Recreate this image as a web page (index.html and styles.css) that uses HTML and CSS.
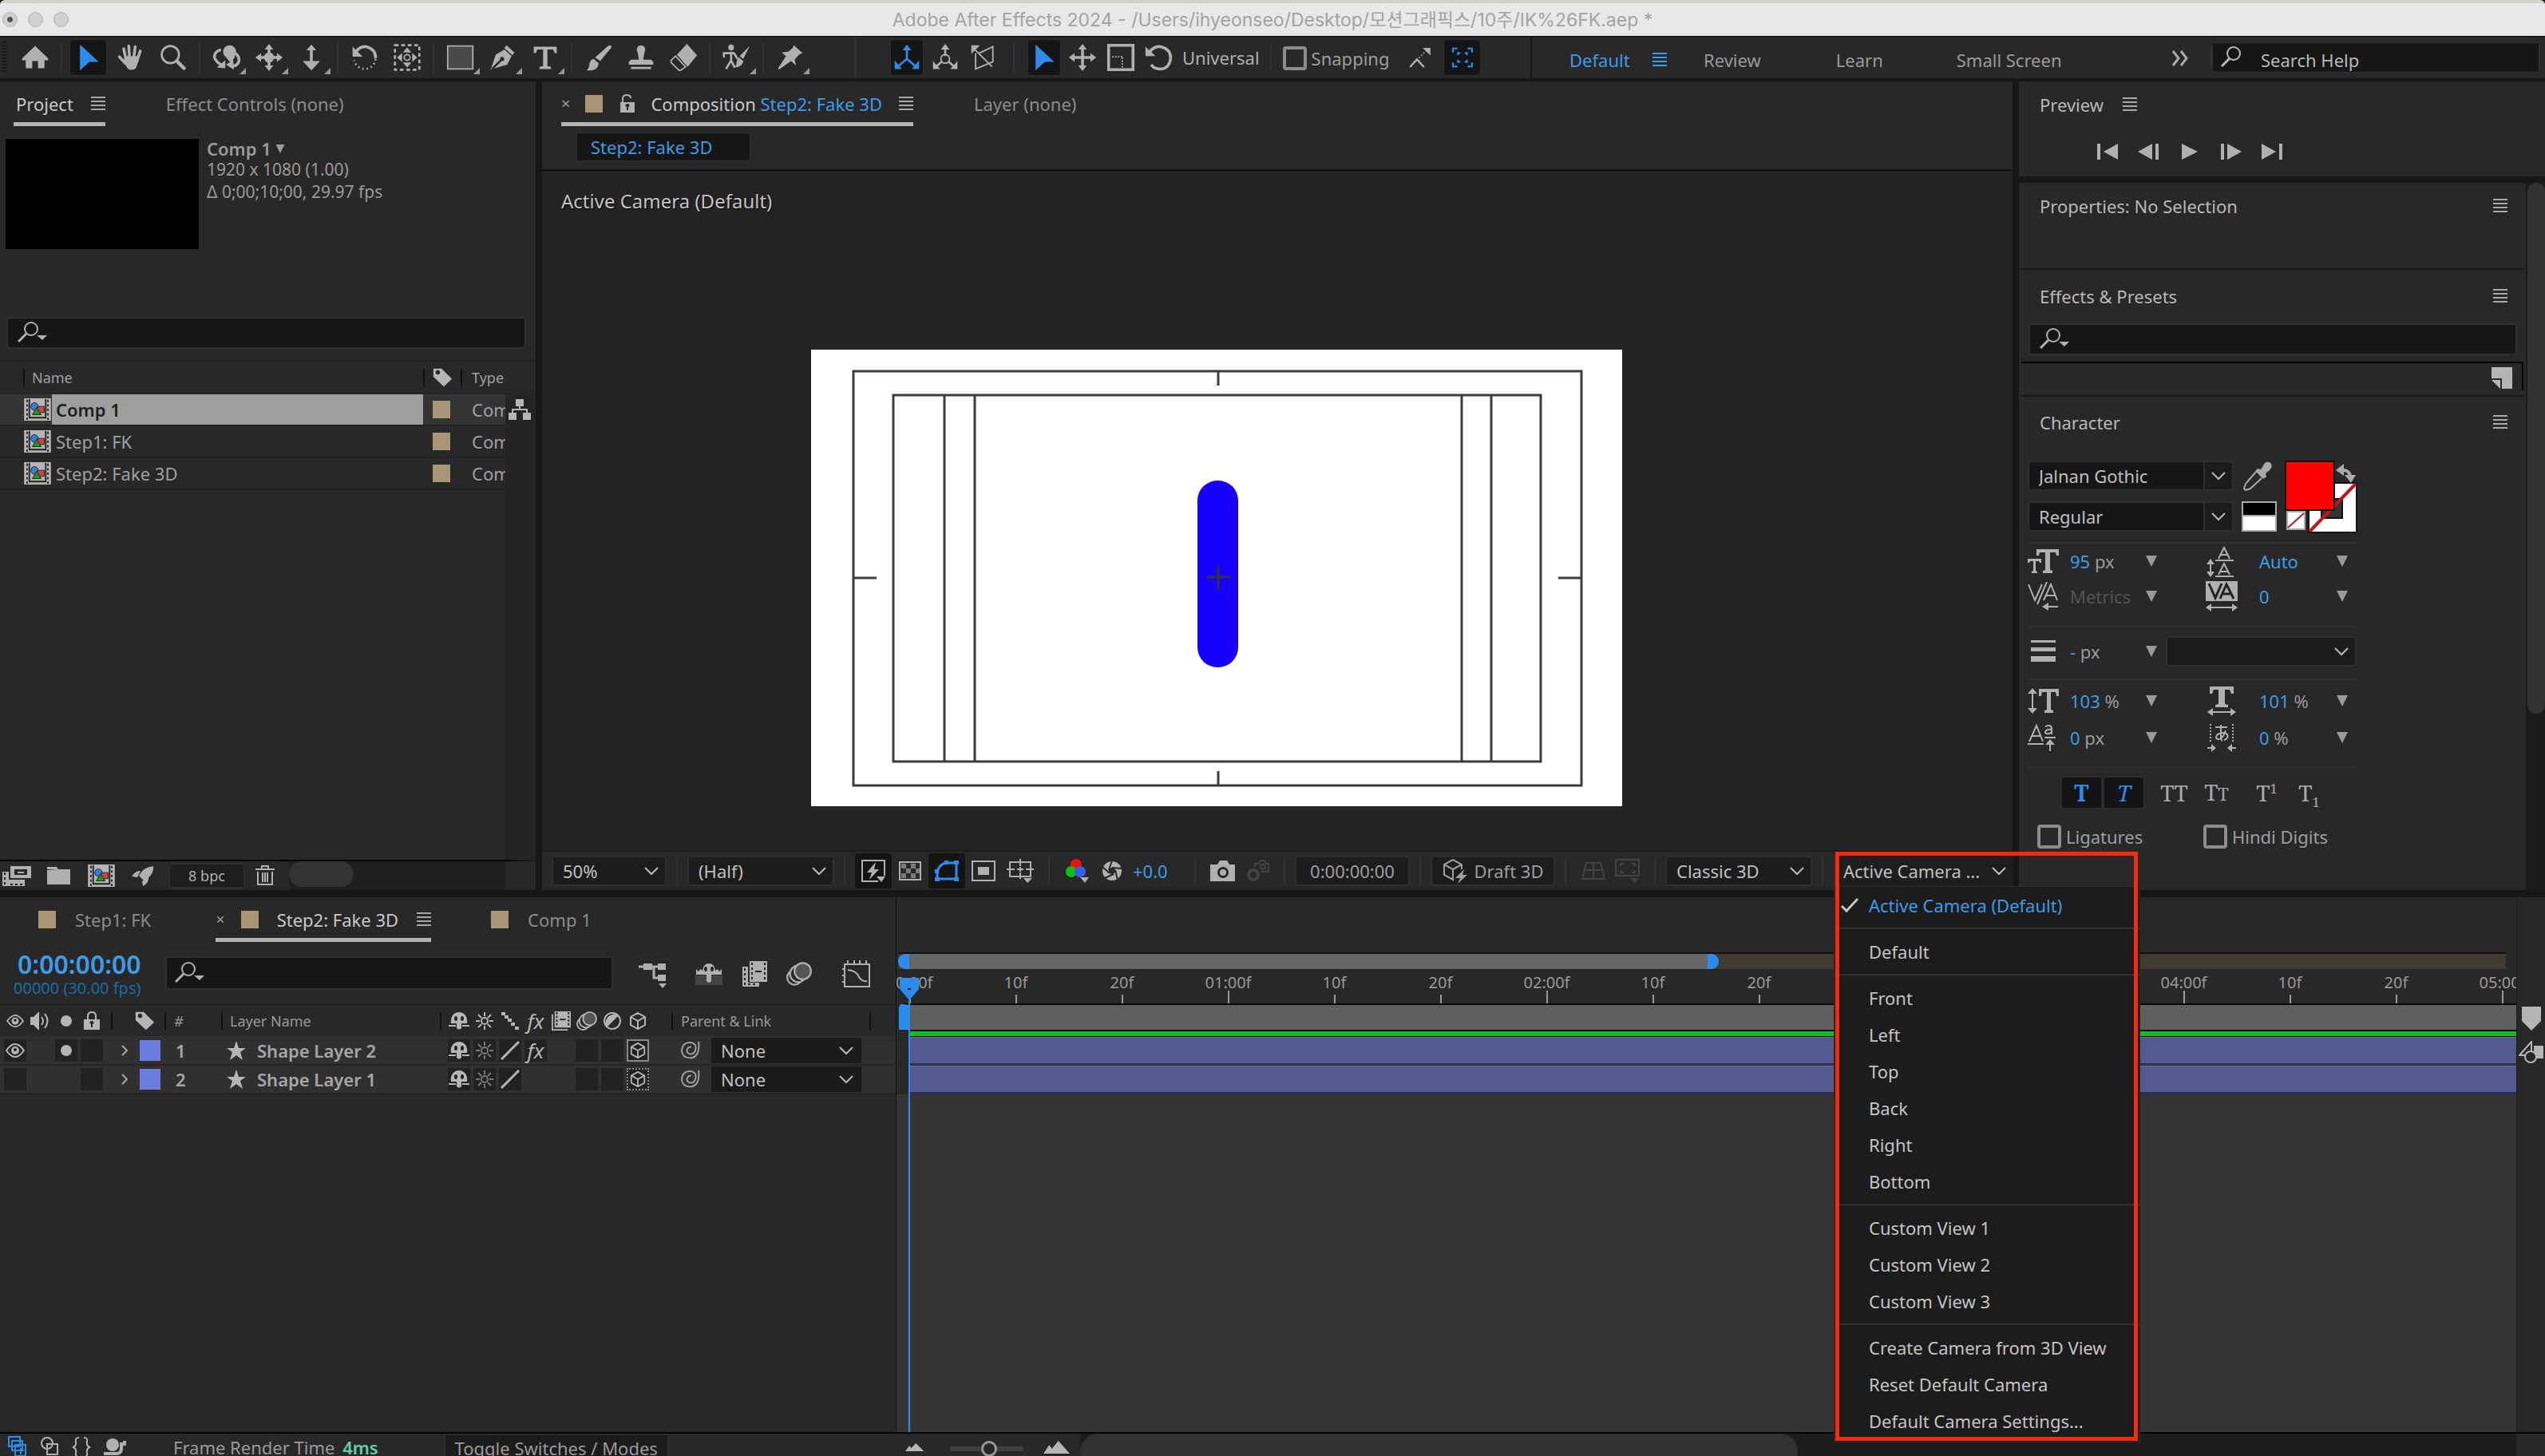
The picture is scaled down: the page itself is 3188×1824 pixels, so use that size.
FILE: index.html
```html
<!DOCTYPE html>
<html lang="en">
<head>
<meta charset="utf-8">
<title>Adobe After Effects 2024</title>
<link rel="stylesheet" href="styles.css">
</head>
<body>
<svg class="sprite" aria-hidden="true">
  <symbol id="home" viewBox="0 0 40 40"><path fill="currentColor" d="M20 4 38 21v3h-5v11h-9V25h-8v10H7V24H2v-3z"/></symbol>
  <symbol id="arrow" viewBox="0 0 40 40"><path fill="currentColor" d="M8 2 34 26H21L8 38z"/></symbol>
  <symbol id="hand" viewBox="0 0 40 40"><g fill="none" stroke="currentColor" stroke-linecap="round" stroke-width="4"><path d="m13 22-3-14M18 20 17 4M24 20l2-15M29 23l4-12M12 28l-8-9"/></g><path fill="currentColor" d="M11 18h19l1 6-4 11q-5 4-11 1l-6-9z"/></symbol>
  <symbol id="lens" viewBox="0 0 40 40"><circle cx="16" cy="16" r="12" fill="none" stroke="currentColor" stroke-width="3"/><path stroke="currentColor" stroke-linecap="round" stroke-width="5" d="m26 26 9 9"/></symbol>
  <symbol id="orbit" viewBox="0 0 40 40"><circle cx="24" cy="12" r="9" fill="currentColor"/><path fill="currentColor" d="m16 16 10 12 6-10z"/><path fill="none" stroke="currentColor" stroke-width="4" d="M12 9Q2 12 3 20q2 6 9 10M32 14q6 5 5 11-2 8-12 7"/><path fill="currentColor" d="m6 34 12-10v11zM30 37l-11-7 10-6z"/></symbol>
  <symbol id="move" viewBox="0 0 40 40"><path stroke="currentColor" stroke-width="4" d="M20 6v28M6 20h28"/><path fill="currentColor" d="m20 1 6 8H14zm0 38-6-8h12zM1 20l8-6v12zm38 0-8 6V14z"/></symbol>
  <symbol id="pan" viewBox="0 0 40 40"><circle cx="20" cy="20" r="7" fill="currentColor"/><path stroke="currentColor" stroke-width="4" d="M20 6v28M6 20h28"/><path fill="currentColor" d="m20 1 6 8H14zm0 38-6-8h12zM1 20l8-6v12zm38 0-8 6V14z"/></symbol>
  <symbol id="dolly" viewBox="0 0 40 40"><path stroke="currentColor" stroke-width="4" d="M20 6v24"/><path fill="currentColor" d="m20 2 7 8H13zm0 36L8 25h24z"/></symbol>
  <symbol id="rotate" viewBox="0 0 40 40"><path fill="none" stroke="currentColor" stroke-width="4" d="M7 13Q13 4 22 5q13 3 13 16"/><path fill="none" stroke="currentColor" stroke-dasharray="2 4" stroke-width="3" d="M35 22q-2 13-15 14Q8 35 5 24"/><path fill="currentColor" d="M3 5v14h14z"/></symbol>
  <symbol id="anchor" viewBox="0 0 40 40"><path fill="none" stroke="currentColor" stroke-width="3" stroke-dasharray="5 4" d="M3 3h34v34H3z"/><path fill="currentColor" d="m20 6 6 7H14zm0 28-6-7h12zM6 20l7-6v12zm28 0-7 6V14z"/><circle cx="20" cy="20" r="4" fill="none" stroke="currentColor" stroke-width="2"/></symbol>
  <symbol id="rect" viewBox="0 0 40 40"><path fill="#4a4a4a" stroke="currentColor" stroke-width="2" d="M2 4h35v32H2z"/></symbol>
  <symbol id="pen" viewBox="0 0 40 40"><path fill="currentColor" fill-rule="evenodd" d="m22 9 10 9-6 12L5 36l-1-1 12-12a3 3 0 1 1 2 2L8 35l-5 2L10 16zM25 3l11 10-3 4L22 7z"/></symbol>
  <symbol id="type" viewBox="0 0 40 40"><path fill="currentColor" d="M4 5h32v9h-3l-2-5h-8v23l5 1v3H12v-3l5-1V9H9l-2 5H4z"/></symbol>
  <symbol id="brush" viewBox="0 0 40 40"><path fill="currentColor" d="M36 3q3 1 1 4L22 25l-7-5L33 4zM13 22l7 6q-1 9-10 10H3q4-3 4-9 1-6 6-7z"/></symbol>
  <symbol id="stamp" viewBox="0 0 40 40"><path fill="currentColor" d="M20 3a6 6 0 0 1 5 9l-2 11h11l3 3v4H3v-4l3-3h11l-2-11a6 6 0 0 1 5-9zM6 33h28v3H6z"/></symbol>
  <symbol id="eraser" viewBox="0 0 40 40"><path fill="currentColor" d="M25 1 39 17 26 33 11 16z"/><path fill="none" stroke="currentColor" stroke-width="2" d="m9 18 14 15-7 5h-2L3 27v-3z"/></symbol>
  <symbol id="roto" viewBox="0 0 40 40"><circle cx="12" cy="6" r="4" fill="currentColor"/><path fill="none" stroke="currentColor" stroke-width="3" d="M2 20v-6h14l5 8M12 12v12L5 36M12 24l5 10"/><path fill="currentColor" d="M38 4 29 22l-5-4zM23 20l6 5q-1 8-12 9 3-4 3-9 1-4 3-5z"/></symbol>
  <symbol id="pin" viewBox="0 0 40 40"><path fill="currentColor" d="m25 3 12 11-5 2-6 7 2 8-7-6L4 37l-1-2 11-17-6-5 9-1 6-5z"/></symbol>
  <symbol id="axes" viewBox="0 0 40 40"><path fill="none" stroke="currentColor" stroke-width="3" d="M20 7v15L7 33M20 22l13 11"/><path fill="currentColor" d="m20 2 6 8H14zM3 24l10 12H3zm34 0v12H27z"/></symbol>
  <symbol id="axes-world" viewBox="0 0 40 40"><path fill="none" stroke="currentColor" stroke-width="3" d="M20 7v11M15 26l-8 7M25 26l8 7"/><circle cx="20" cy="22" r="6" fill="none" stroke="currentColor" stroke-width="2"/><path fill="currentColor" d="m20 1 6 8H14zM3 25l10 11H3zm34 0v11H27z"/></symbol>
  <symbol id="axes-view" viewBox="0 0 40 40"><path fill="none" stroke="currentColor" stroke-width="2" d="m6 7 26 26M9 14v22l24-10V5L14 14"/><path fill="currentColor" d="M3 3h12L3 15z"/></symbol>
  <symbol id="scale" viewBox="0 0 40 40"><path fill="none" stroke="currentColor" stroke-width="4" d="M3 3h34v34H3z"/><path stroke="currentColor" stroke-dasharray="2 2" stroke-width="2" d="M8 19h14M22 20v14"/></symbol>
  <symbol id="spin" viewBox="0 0 40 40"><path fill="none" stroke="currentColor" stroke-width="4" d="M7 12Q13 4 22 5q14 3 14 16-2 15-15 15-8 0-12-6"/><path fill="currentColor" d="M1 5v13h14z"/></symbol>
  <symbol id="snap" viewBox="0 0 40 40"><path fill="none" stroke="currentColor" stroke-width="3" d="m4 35 11-12 11 12"/><path stroke="currentColor" stroke-dasharray="2 3" stroke-width="2" d="m18 21 12-12"/><path fill="currentColor" d="M24 5h12v12z"/></symbol>
  <symbol id="snapbox" viewBox="0 0 40 40"><path fill="none" stroke="currentColor" stroke-width="3" d="M3 11V4h8M29 4h8v7M37 29v7h-8M11 36H3v-7"/><path fill="none" stroke="currentColor" stroke-width="3" d="M12 16v-4h4M24 12h4v4M12 24v4h4M24 28h4v-4"/></symbol>
  <symbol id="bars" viewBox="0 0 18 18"><path stroke="currentColor" stroke-width="2" d="M0 1h18M0 6h18M0 11h18M0 16h18"/></symbol>
  <symbol id="find" viewBox="0 0 40 30"><circle cx="17" cy="10" r="8" fill="none" stroke="currentColor" stroke-width="2"/><path stroke="currentColor" stroke-width="3" d="M11 16 1 26"/><path fill="currentColor" d="M24 18h13l-6 6z"/></symbol>
  <symbol id="find-plain" viewBox="0 0 26 30"><circle cx="16" cy="10" r="8" fill="none" stroke="currentColor" stroke-width="2"/><path stroke="currentColor" stroke-width="3" d="M11 16 1 26"/></symbol>
  <symbol id="chev" viewBox="0 0 18 12"><path fill="none" stroke="currentColor" stroke-width="2" d="m1 2 8 8 8-8"/></symbol>
  <symbol id="tri" viewBox="0 0 14 14"><path fill="currentColor" d="M0 0h14L7 14z"/></symbol>
  <symbol id="tag" viewBox="0 0 28 28"><path fill="currentColor" fill-rule="evenodd" d="M2 2h11l14 14-11 10L2 13zM8 4a3 3 0 1 0 0 6 3 3 0 0 0 0-6z"/></symbol>
  <symbol id="comp" viewBox="0 0 36 30"><path fill="#b5b5b5" d="M0 0h36v30H0z"/><path stroke="#222" stroke-width="2" stroke-dasharray="3 3" d="M4 2v28M32 2v28"/><path stroke="#222" stroke-width="2" d="M7 26h22M7 1v26M29 1v26"/><circle cx="14" cy="11" r="5" fill="#2d7fe0" stroke="#222"/><path fill="#e33b3b" stroke="#222" d="M18 11h9v8h-9z"/><path fill="#139a1b" stroke="#222" d="m17 12 6 10H11z"/></symbol>
  <symbol id="tree" viewBox="0 0 28 26"><path fill="currentColor" d="M9 0h10v9H9zM0 17h10v9H0zM18 17h10v9H18z"/><path fill="none" stroke="currentColor" stroke-width="2" d="M14 8v5M5 17v-4h18v4"/></symbol>
  <symbol id="interpret" viewBox="0 0 36 26"><path fill="currentColor" fill-rule="evenodd" d="M10 1h26v15H10zM15 5v7h16V5zM0 8h8v10h20v8H0z"/><path stroke="#222" stroke-width="2" stroke-dasharray="3 3" d="M3 9v16M10 24h18"/><path stroke="currentColor" stroke-width="2" d="M19 9h8"/></symbol>
  <symbol id="folder" viewBox="0 0 30 22"><path fill="currentColor" d="M0 0h12l2 3h15v19H0zM0 3v1h13z"/></symbol>
  <symbol id="rocket" viewBox="0 0 28 26"><path fill="currentColor" d="M27 1q1 12-12 18l-6-6Q15 2 27 1zM0 14q5-8 11-7l-4 8zM13 20l8-5q1 7-7 11z"/></symbol>
  <symbol id="trash" viewBox="0 0 24 26"><path fill="none" stroke="currentColor" stroke-width="2" d="M0 5h24M8 5V1h8v4M3 8v16h18V8M9 9v12M12 9v12M15 9v12"/></symbol>
  <symbol id="star" viewBox="0 0 24 24"><path fill="currentColor" d="m12 0 3 9h9l-7 5 3 10-8-6-8 6 3-10-7-5h9z"/></symbol>
  <symbol id="eye" viewBox="0 0 24 20"><path fill="none" stroke="currentColor" stroke-width="2" d="M1 10q11-16 22 0-11 16-22 0z"/><circle cx="12" cy="10" r="5" fill="currentColor"/><circle cx="12" cy="9" r="2" fill="#222"/></symbol>
  <symbol id="speaker" viewBox="0 0 26 24"><path fill="currentColor" d="M0 7h4l7-7v24l-7-7H0z"/><path fill="none" stroke="currentColor" stroke-width="2" d="M14 7q4 5 0 10M18 3q7 9 0 18"/></symbol>
  <symbol id="dot" viewBox="0 0 16 16"><circle cx="8" cy="8" r="7" fill="currentColor"/></symbol>
  <symbol id="lock" viewBox="0 0 20 24"><path fill="none" stroke="currentColor" stroke-width="2" d="M5 11V6q0-5 5-5t5 5v5"/><path fill="currentColor" fill-rule="evenodd" d="M0 10h20v13H0zM10 12a2 2 0 0 0-1 4v4h2v-4a2 2 0 0 0-1-4z"/></symbol>
  <symbol id="unlock" viewBox="0 0 20 24"><path fill="none" stroke="currentColor" stroke-width="2" d="M4 11V6q0-5 5-5t5 4"/><path fill="currentColor" fill-rule="evenodd" d="M1 10h18v13H1zM10 12a2 2 0 0 0-1 4v4h2v-4a2 2 0 0 0-1-4z"/></symbol>
  <symbol id="shy" viewBox="0 0 26 24"><path fill="currentColor" fill-rule="evenodd" d="M3 15q-1-6 2-10 3-4 8-4t8 4q3 4 2 10h-7v6q-3 3-6 0v-6zM9 6a2 3 0 1 0 0 6 2 3 0 0 0 0-6zm8 0a2 3 0 1 0 0 6 2 3 0 0 0 0-6z"/><path stroke="currentColor" stroke-width="2" d="M0 18h9M17 18h9"/></symbol>
  <symbol id="shy-up" viewBox="0 0 34 28"><path fill="#444" d="M0 16h34v12H0z"/><path fill="currentColor" fill-rule="evenodd" d="M1 8l3 3 2-3 3 2q1-9 8-9t8 9l3-2 2 3 3-3v7H20v8q-3 4-6 0v-8H1zM13 5a2 3 0 1 0 0 6 2 3 0 0 0 0-6zm8 0a2 3 0 1 0 0 6 2 3 0 0 0 0-6z"/></symbol>
  <symbol id="sun" viewBox="0 0 24 24"><circle cx="12" cy="12" r="4" fill="none" stroke="currentColor" stroke-width="2"/><path stroke="currentColor" stroke-width="2" d="M12 1v5M12 18v5M1 12h5M18 12h5M4 4l4 4M16 16l4 4M20 4l-4 4M8 16l-4 4"/></symbol>
  <symbol id="stairs" viewBox="0 0 24 24"><path fill="currentColor" d="M1 1h5v4H1zM5 5h5v4H5zM9 9h5v4H9zM13 14h5v4h-5zM18 19h5v4h-5z"/></symbol>
  <symbol id="slash" viewBox="0 0 24 24"><path stroke="currentColor" stroke-width="3" d="M1 23 23 1"/></symbol>
  <symbol id="film" viewBox="0 0 28 26"><path fill="currentColor" d="M5 0h22v22H5zM1 4h2v20h20v2H1z"/><path stroke="#222" stroke-width="2" stroke-dasharray="3 2" d="M8 1v20M24 1v20"/><path stroke="#222" stroke-width="2" d="M12 11h8"/></symbol>
  <symbol id="film-big" viewBox="0 0 32 32"><path fill="currentColor" d="M10 0h22v26H10zM1 7h7v20h14v5H1z"/><path stroke="#222" stroke-width="2" stroke-dasharray="3 3" d="M13 2v23M29 2v23M4 9v22M8 29h12"/><path stroke="#222" stroke-width="2" d="M17 13h8"/></symbol>
  <symbol id="blur" viewBox="0 0 28 26"><circle cx="9" cy="17" r="8" fill="#282828" stroke="currentColor" stroke-width="2"/><circle cx="13" cy="13" r="9" fill="#282828" stroke="currentColor" stroke-width="2"/><circle cx="18" cy="10" r="9" fill="#555" stroke="currentColor" stroke-width="2"/></symbol>
  <symbol id="half" viewBox="0 0 24 24"><circle cx="12" cy="12" r="10" fill="none" stroke="currentColor" stroke-width="2"/><path fill="currentColor" d="M20 5A11 11 0 0 0 5 20z"/></symbol>
  <symbol id="cube" viewBox="0 0 24 24"><path fill="none" stroke="currentColor" stroke-width="2" d="m12 2 9 5v10l-9 5-9-5V7zM12 22V12L3 7M12 12l9-5"/></symbol>
  <symbol id="whip" viewBox="0 0 26 26"><path fill="none" stroke="currentColor" stroke-width="2" d="M24 1q2 20-10 22Q2 24 1 13 2 2 13 2q8 1 7 9-1 7-7 7-5-1-5-5 1-5 6-5"/></symbol>
  <symbol id="flow" viewBox="0 0 36 36"><path fill="currentColor" d="M6 5h11v8H6zM24 5h10v8H24zM24 19h10v8H24zM25 30h10l-5 6z"/><path fill="none" stroke="currentColor" stroke-width="3" d="M0 9h25M19 9v14h6"/></symbol>
  <symbol id="graph" viewBox="0 0 36 34"><path fill="none" stroke="currentColor" stroke-width="2" d="M3 5h31v28H3zM7 12q11 1 14 9 4 6 10 5M7 0v5M15 0v5M22 0v5M30 0v5M0 11h3M0 19h3M0 27h3"/></symbol>
  <symbol id="fast" viewBox="0 0 32 30"><path fill="none" stroke="currentColor" stroke-width="2" d="M22 28H2V2h28v19"/><path fill="currentColor" d="M19 4 8 17h6l-3 9 12-13h-6zM20 22h11l-5 7z"/></symbol>
  <symbol id="checker" viewBox="0 0 30 26"><path fill="none" stroke="currentColor" stroke-width="2" d="M2 2h26v22H2z"/><path fill="currentColor" opacity=".6" d="M4 4h6v6H4zM16 4h6v6h-6zM10 10h6v6h-6zM22 10h5v6h-5zM4 16h6v6H4zM16 16h6v6h-6z"/></symbol>
  <symbol id="mask" viewBox="0 0 32 28"><path fill="none" stroke="currentColor" stroke-width="3" d="M4 24V15Q7 5 15 4h13v20z"/><path fill="currentColor" d="M1 22h6v5H1zM25 22h6v5h-6zM25 1h6v5h-6zM1 12h5v5H1zM13 1h5v5h-5z"/></symbol>
  <symbol id="region" viewBox="0 0 30 26"><path fill="none" stroke="currentColor" stroke-width="2" d="M1 1h28v24H1z"/><path fill="currentColor" d="M8 8h14v10H8z"/></symbol>
  <symbol id="guides" viewBox="0 0 34 30"><path fill="none" stroke="currentColor" stroke-width="2" d="M4 4h26v18H4zM17 0v9M17 17v8M0 13h10M24 13h10M13 13h8M17 10v6"/><path fill="currentColor" d="M21 24h11l-6 6z"/></symbol>
  <symbol id="rgb" viewBox="0 0 32 30"><circle cx="15" cy="7" r="7" fill="#f01010"/><circle cx="9" cy="16" r="7" fill="#10c010"/><circle cx="20" cy="16" r="7" fill="#3c5cf0"/><path fill="currentColor" d="M20 23h11l-5 7z"/></symbol>
  <symbol id="aperture" viewBox="0 0 28 28"><circle cx="14" cy="14" r="12" fill="currentColor"/><circle cx="14" cy="14" r="4" fill="#262626"/><path stroke="#262626" stroke-width="2" d="M10 13 14 1M14 10l12 1M18 13l3 12M16 18 5 23M11 17 2 9"/></symbol>
  <symbol id="camera" viewBox="0 0 32 26"><path fill="currentColor" fill-rule="evenodd" d="M0 5h9l3-5h9l3 5h7v21H0zM16 8a7 7 0 1 0 0 14 7 7 0 0 0 0-14z"/><circle cx="16" cy="15" r="4" fill="currentColor"/></symbol>
  <symbol id="ghost" viewBox="0 0 32 28"><circle cx="11" cy="19" r="6" fill="none" stroke="currentColor" stroke-width="4"/><path fill="none" stroke="currentColor" stroke-width="2" d="M13 9V5h5l2-4h5l2 4h3v10h-9"/><circle cx="23" cy="9" r="3" fill="none" stroke="currentColor" stroke-width="2"/></symbol>
  <symbol id="draft" viewBox="0 0 32 32"><path fill="none" stroke="currentColor" stroke-width="2" d="m13 2 11 6v6M13 2 2 8v13l11 6V14L2 8M13 14l11-6"/><path fill="currentColor" d="m27 14-11 11h6l-3 7 12-11h-6z"/></symbol>
  <symbol id="ground" viewBox="0 0 30 22"><path fill="none" stroke="currentColor" stroke-width="2" d="M6 1h18l5 20H1zM15 1v20M4 10h22"/></symbol>
  <symbol id="fit" viewBox="0 0 32 30"><path fill="none" stroke="currentColor" stroke-width="2" d="M1 1h29v20H1z"/><path fill="none" stroke="currentColor" stroke-width="2" d="M7 9V6h4M21 6h4v3M25 14v3h-4M11 17H7v-3"/><path fill="currentColor" d="M19 24h11l-5 6z"/></symbol>
  <symbol id="first" viewBox="0 0 28 20"><path fill="currentColor" d="M0 0h4v20H0zM26 0v20L8 10z"/></symbol>
  <symbol id="prev" viewBox="0 0 28 20"><path fill="currentColor" d="M22 0h4v20h-4zM18 0v20L0 10z"/></symbol>
  <symbol id="play" viewBox="0 0 28 20"><path fill="currentColor" d="M4 0v20l20-10z"/></symbol>
  <symbol id="next" viewBox="0 0 28 20"><path fill="currentColor" d="M2 0h4v20H2zM10 0v20l18-10z"/></symbol>
  <symbol id="last" viewBox="0 0 28 20"><path fill="currentColor" d="M24 0h4v20h-4zM2 0v20l18-10z"/></symbol>
  <symbol id="note" viewBox="0 0 28 28"><path fill="currentColor" d="M1 0h26v27H14V14H1zM1 16h11v11z"/></symbol>
  <symbol id="dropper" viewBox="0 0 40 40"><path fill="currentColor" d="M29 3q5-3 8 1 2 4-2 8l-5 4 1 4-4 3L17 13l3-3 4 1z"/><path fill="none" stroke="currentColor" stroke-width="2" d="M18 14 5 29l-2 6 2 2 6-2 14-13"/></symbol>
  <symbol id="swap" viewBox="0 0 26 24"><path fill="none" stroke="currentColor" stroke-width="4" d="M6 8q12-1 12 9"/><path fill="currentColor" d="M0 8 10 0v15zM11 14h14l-6 10z"/></symbol>
  <symbol id="c-size" viewBox="0 0 40 32"><path fill="currentColor" d="M11 1h28v8h-3l-1-4h-7v22l3 1v3H19v-3l3-1V5h-7l-1 4h-3zM0 13h17v5h-2l-1-2h-4v12l2 1v2H5v-2l2-1V16H3l-1 2H0z"/></symbol>
  <symbol id="c-lead" viewBox="0 0 40 40"><path fill="none" stroke="currentColor" stroke-width="2" d="m16 17 7-14 7 14M18 12h10M12 19h23M16 37l7-14 7 14M18 33h10M12 39h23M6 22v14"/><path fill="currentColor" d="m6 17 5 7H1zm0 23-5-7h10z"/></symbol>
  <symbol id="c-kern" viewBox="0 0 40 36"><path fill="none" stroke="currentColor" stroke-width="2" d="m1 3 8 20L18 3M12 28 24 0M20 23l9-20 8 20M23 17h11M20 31h18"/><path fill="currentColor" d="m18 31 8-5v10z"/></symbol>
  <symbol id="c-track" viewBox="0 0 40 38"><path fill="currentColor" d="M0 0h40v25H0z"/><path fill="none" stroke="#222" stroke-width="3" d="m4 3 8 18 8-18M18 22l8-18 9 18M22 16h10"/><path stroke="currentColor" stroke-width="2" d="M5 33h30"/><path fill="currentColor" d="m0 33 7-5v10zm40 0-7 5V28z"/></symbol>
  <symbol id="c-stroke" viewBox="0 0 32 28"><path fill="currentColor" d="M0 0h31v3H0zM0 9h31v5H0zM0 20h31v7H0z"/></symbol>
  <symbol id="c-vert" viewBox="0 0 40 32"><path fill="currentColor" d="M14 1h25v9h-3l-1-5h-6v22l3 1v3H21v-3l3-1V5h-6l-1 5h-3zM6 0l6 7H0zm0 32-6-7h12z"/><path stroke="currentColor" stroke-width="2" d="M6 5v22"/></symbol>
  <symbol id="c-horz" viewBox="0 0 40 38"><path fill="currentColor" d="M5 1h30v9h-3l-2-5h-6v18l4 1v3H12v-3l4-1V5h-6l-2 5H5zM2 33l7-5v10zm36 0-7 5V28z"/><path stroke="currentColor" stroke-width="2" d="M7 33h26"/></symbol>
  <symbol id="c-base" viewBox="0 0 40 34"><path fill="none" stroke="currentColor" stroke-width="2" d="m2 22 9-20 8 20M5 15h12M0 25h20M22 3q8-3 8 3v7M30 7q-8-1-8 4 3 3 8-1M21 17h14M28 22v12"/><path fill="currentColor" d="m28 19 6 7H22z"/></symbol>
  <symbol id="c-tsume" viewBox="0 0 40 36"><path fill="none" stroke="currentColor" stroke-dasharray="2 2" stroke-width="2" d="M6 1v22M34 1v22"/><path fill="none" stroke="currentColor" stroke-width="2" d="M12 5h15M19 2v15q0 4 2 5M25 9q-4 12-10 11-4-2 0-6 8-4 12 0 2 5-4 7M2 31h8M30 31h8"/><path fill="currentColor" d="m13 31-6-5v10zm14 0 6-5v10z"/></symbol>
  <symbol id="marker" viewBox="0 0 26 30"><path fill="currentColor" d="M1 0h24v18L13 30 1 18z"/></symbol>
  <symbol id="shapes" viewBox="0 0 32 28"><path fill="currentColor" d="M19 6h12v16H19z"/><path fill="#282828" stroke="currentColor" stroke-width="2" d="M16 1 1 18h15z"/><circle cx="15" cy="20" r="7" fill="#282828" stroke="currentColor" stroke-width="2"/></symbol>
  <symbol id="hill" viewBox="0 0 38 18"><path fill="currentColor" d="m0 18 8-12 4 5L21 0l16 18z"/></symbol>
  <symbol id="panes" viewBox="0 0 24 28"><path fill="none" stroke="currentColor" stroke-width="2" d="M1 1h14v12H1zM5 6h13v12H5zM9 11h13v14H9zM12 18h8M16 15v8"/></symbol>
  <symbol id="mixer" viewBox="0 0 24 28"><circle cx="9" cy="9" r="7" fill="none" stroke="currentColor" stroke-width="2"/><path fill="none" stroke="currentColor" stroke-width="2" d="M9 10h13v13H9z"/></symbol>
  <symbol id="braces" viewBox="0 0 24 28"><path fill="none" stroke="currentColor" stroke-width="2" d="M9 2q-5 0-4 5 1 6-4 7 5 1 4 7-1 5 4 5M15 2q5 0 4 5-1 6 4 7-5 1-4 7 1 5-4 5"/></symbol>
  <symbol id="snail" viewBox="0 0 28 28"><circle cx="11" cy="11" r="8" fill="currentColor"/><path fill="none" stroke="currentColor" stroke-width="4" d="M0 22h16q7 0 6-10V8M26 6v6"/></symbol>
</svg>

<header class="titlebar">
  <div class="lights"><span class="light edited"></span><span class="light"></span><span class="light"></span></div>
  <h1>Adobe After Effects 2024 - /Users/ihyeonseo/Desktop/모션그래픽스/10주/IK%26FK.aep *</h1>
</header>

<nav class="toolbar">
  <span class="grip"></span>
  <button class="tool" aria-label="Home"><svg><use href="#home"/></svg></button>
  <i class="rule"></i>
  <button class="tool on" aria-label="Selection"><svg><use href="#arrow"/></svg></button>
  <button class="tool" aria-label="Hand"><svg><use href="#hand"/></svg></button>
  <button class="tool" aria-label="Zoom"><svg><use href="#lens"/></svg></button>
  <i class="rule"></i>
  <button class="tool more" aria-label="Orbit"><svg><use href="#orbit"/></svg></button>
  <button class="tool more" aria-label="Pan"><svg><use href="#pan"/></svg></button>
  <button class="tool more" aria-label="Dolly"><svg><use href="#dolly"/></svg></button>
  <i class="rule"></i>
  <button class="tool" aria-label="Rotate"><svg><use href="#rotate"/></svg></button>
  <button class="tool" aria-label="Anchor point"><svg><use href="#anchor"/></svg></button>
  <i class="rule"></i>
  <button class="tool more" aria-label="Rectangle"><svg><use href="#rect"/></svg></button>
  <button class="tool more" aria-label="Pen"><svg><use href="#pen"/></svg></button>
  <button class="tool more" aria-label="Type"><svg><use href="#type"/></svg></button>
  <i class="rule"></i>
  <button class="tool" aria-label="Brush"><svg><use href="#brush"/></svg></button>
  <button class="tool" aria-label="Clone stamp"><svg><use href="#stamp"/></svg></button>
  <button class="tool" aria-label="Eraser"><svg><use href="#eraser"/></svg></button>
  <i class="rule"></i>
  <button class="tool more" aria-label="Roto brush"><svg><use href="#roto"/></svg></button>
  <i class="rule"></i>
  <button class="tool more" aria-label="Puppet pin"><svg><use href="#pin"/></svg></button>
  <i class="divider"></i>
  <div class="modes">
    <button class="tool slim on" aria-label="Local axis"><svg><use href="#axes"/></svg></button>
    <button class="tool slim" aria-label="World axis"><svg><use href="#axes-world"/></svg></button>
    <button class="tool slim" aria-label="View axis"><svg><use href="#axes-view"/></svg></button>
    <i class="rule wide"></i>
    <button class="tool slim on" aria-label="Universal gizmo"><svg><use href="#arrow"/></svg></button>
    <button class="tool slim" aria-label="Position gizmo"><svg><use href="#move"/></svg></button>
    <button class="tool slim" aria-label="Scale gizmo"><svg><use href="#scale"/></svg></button>
    <button class="tool slim" aria-label="Rotation gizmo"><svg><use href="#spin"/></svg></button>
    <span class="mode-name">Universal</span>
    <i class="rule"></i>
    <label class="check"><input type="checkbox">Snapping</label>
    <button class="tool snap-edge" aria-label="Snap to edges"><svg><use href="#snap"/></svg></button>
    <button class="tool on" aria-label="Snap to features"><svg><use href="#snapbox"/></svg></button>
  </div>
  <div class="workspaces">
    <button class="current">Default</button><button class="ws-menu" aria-label="Workspace menu"><svg class="bars"><use href="#bars"/></svg></button>
    <button class="ws-review">Review</button>
    <button class="ws-learn">Learn</button>
    <button class="ws-small">Small Screen</button>
    <button class="overflow" aria-label="More workspaces"><svg width="24" height="22" viewBox="0 0 24 22"><path fill="none" stroke="currentColor" stroke-width="3" d="m3 2 7 9-7 9M13 2l7 9-7 9"/></svg></button>
  </div>
  <div class="help"><svg width="26" height="30"><use href="#find-plain"/></svg><input type="text" aria-label="Search Help" placeholder="Search Help"></div>
</nav>

<main class="workspace">
  <section class="panel project">
    <div class="tabs">
      <button class="tab active">Project<svg class="bars"><use href="#bars"/></svg></button>
      <button class="tab">Effect Controls (none)</button>
    </div>
    <div class="summary">
      <div class="thumb"></div>
      <div class="facts"><strong>Comp 1<svg class="tri"><use href="#tri"/></svg></strong><span>1920 x 1080 (1.00)</span><span>Δ 0;00;10;00, 29.97 fps</span></div>
    </div>
    <div class="search"><svg><use href="#find"/></svg><input type="text" aria-label="Search project"></div>
    <table class="items">
      <colgroup><col class="w-pad"><col class="w-name"><col class="w-label"><col class="w-type"><col></colgroup>
      <thead><tr><th></th><th class="name">Name</th><th class="label"><svg class="tag"><use href="#tag"/></svg></th><th>Type</th><th class="side"></th></tr></thead>
      <tbody>
        <tr class="selected"><td></td><td class="name"><div><svg class="comp"><use href="#comp"/></svg><span>Comp 1</span></div></td><td class="label"><i class="chip"></i></td><td class="type">Com</td><td class="side"><svg class="tree"><use href="#tree"/></svg></td></tr>
        <tr><td></td><td class="name"><div><svg class="comp"><use href="#comp"/></svg><span>Step1: FK</span></div></td><td class="label"><i class="chip"></i></td><td class="type">Com</td><td class="side"></td></tr>
        <tr><td></td><td class="name"><div><svg class="comp"><use href="#comp"/></svg><span>Step2: Fake 3D</span></div></td><td class="label"><i class="chip"></i></td><td class="type">Com</td><td class="side"></td></tr>
      </tbody>
    </table>
    <div class="items-rest"></div>
    <footer class="project-bar">
      <button aria-label="Interpret footage"><svg width="36" height="26"><use href="#interpret"/></svg></button>
      <button aria-label="New folder"><svg width="30" height="22"><use href="#folder"/></svg></button>
      <button aria-label="New composition"><svg width="36" height="28"><use href="#comp"/></svg></button>
      <button aria-label="Project settings"><svg width="28" height="26"><use href="#rocket"/></svg></button>
      <button class="depth">8 bpc</button>
      <button class="bin" aria-label="Delete"><svg width="24" height="26"><use href="#trash"/></svg></button>
      <div class="hscroll"><i></i></div>
    </footer>
  </section>

  <section class="panel viewer">
    <div class="tabs">
      <button class="tab active"><span class="x">×</span><i class="chip"></i><svg class="lock"><use href="#unlock"/></svg><span>Composition <b>Step2: Fake 3D</b></span><svg class="bars"><use href="#bars"/></svg></button>
      <button class="tab">Layer (none)</button>
    </div>
    <div class="crumbs"><button>Step2: Fake 3D</button></div>
    <div class="stage">
      <p class="view-name">Active Camera (Default)</p>
      <svg class="canvas" viewBox="0 0 1016 572" width="1016" height="572">
        <path fill="#fff" d="M0 0h1016v572H0z"/>
        <rect x="484" y="164" width="51" height="234" rx="25" fill="#1800ff"/>
        <g fill="none" stroke="#3c3c3c" stroke-width="3"><path d="M53 27h912v519H53zM103 57h811v459H103zM167 57v459M205 57v459M815 57v459M852 57v459M510 27v18M510 528v18M53 286h29M936 286h29"/></g>
        <path stroke="#333" stroke-width="3" d="M495 285h30M510 271v30"/>
      </svg>
    </div>
    <footer class="view-bar">
      <div class="drop w144"><select aria-label="Magnification"><option>50%</option></select><svg><use href="#chev"/></svg></div>
      <i class="rule"></i>
      <div class="drop w184"><select aria-label="Resolution"><option>(Half)</option></select><svg><use href="#chev"/></svg></div>
      <i class="rule"></i>
      <button class="cell on" aria-label="Fast previews"><svg width="32" height="30"><use href="#fast"/></svg></button>
      <button class="cell" aria-label="Transparency grid"><svg width="30" height="26"><use href="#checker"/></svg></button>
      <button class="cell on" aria-label="Mask visibility"><svg width="32" height="28"><use href="#mask"/></svg></button>
      <button class="cell" aria-label="Region of interest"><svg width="30" height="26"><use href="#region"/></svg></button>
      <button class="cell" aria-label="Guides"><svg width="34" height="30"><use href="#guides"/></svg></button>
      <i class="rule"></i>
      <button class="cell snug" aria-label="Channels"><svg width="32" height="30"><use href="#rgb"/></svg></button>
      <button class="cell" aria-label="Exposure"><svg width="28" height="28"><use href="#aperture"/></svg></button>
      <button class="exposure">+0.0</button>
      <i class="rule"></i>
      <button class="cell snug" aria-label="Snapshot"><svg width="32" height="26"><use href="#camera"/></svg></button>
      <button class="cell snug dim" aria-label="Show snapshot"><svg width="32" height="28"><use href="#ghost"/></svg></button>
      <i class="rule"></i>
      <button class="box w144">0:00:00:00</button>
      <i class="rule"></i>
      <button class="box w156"><svg width="32" height="32"><use href="#draft"/></svg>Draft 3D</button>
      <i class="rule"></i>
      <button class="cell snug dim" aria-label="Ground plane"><svg width="30" height="22"><use href="#ground"/></svg></button>
      <button class="cell snug dim" aria-label="Extended viewer"><svg width="32" height="30"><use href="#fit"/></svg></button>
      <i class="rule"></i>
      <div class="drop w184"><select aria-label="Renderer"><option>Classic 3D</option></select><svg><use href="#chev"/></svg></div>
      <i class="rule"></i>
      <div class="camera-picker">
        <button class="camera-btn">Active Camera ...<svg width="18" height="12"><use href="#chev"/></svg></button>
        <ul class="menu">
          <li class="chosen"><button><svg class="tick" viewBox="0 0 24 20"><path fill="none" stroke="currentColor" stroke-width="3" d="m2 11 6 6L22 2"/></svg>Active Camera (Default)</button></li>
          <li class="split"></li>
          <li><button>Default</button></li>
          <li class="split"></li>
          <li><button>Front</button></li>
          <li><button>Left</button></li>
          <li><button>Top</button></li>
          <li><button>Back</button></li>
          <li><button>Right</button></li>
          <li><button>Bottom</button></li>
          <li class="split"></li>
          <li><button>Custom View 1</button></li>
          <li><button>Custom View 2</button></li>
          <li><button>Custom View 3</button></li>
          <li class="split"></li>
          <li><button>Create Camera from 3D View</button></li>
          <li><button>Reset Default Camera</button></li>
          <li><button>Default Camera Settings...</button></li>
        </ul>
        <div class="highlight"></div>
      </div>
    </footer>
  </section>

  <aside class="right">
    <section class="panel preview">
      <h2>Preview<svg class="bars"><use href="#bars"/></svg></h2>
      <div class="transport">
        <button aria-label="First frame"><svg><use href="#first"/></svg></button><button aria-label="Previous frame"><svg><use href="#prev"/></svg></button><button aria-label="Play"><svg><use href="#play"/></svg></button><button aria-label="Next frame"><svg><use href="#next"/></svg></button><button aria-label="Last frame"><svg><use href="#last"/></svg></button>
      </div>
    </section>
    <div class="stack">
      <div class="stack-body">
        <section class="group properties"><h2>Properties: No Selection<svg class="bars"><use href="#bars"/></svg></h2></section>
        <section class="group effects">
          <h2>Effects &amp; Presets<svg class="bars"><use href="#bars"/></svg></h2>
          <div class="search"><svg><use href="#find"/></svg><input type="text" aria-label="Search effects"></div>
          <div class="preset-list"><svg width="28" height="28"><use href="#note"/></svg></div>
        </section>
        <section class="group character">
          <h2>Character<svg class="bars"><use href="#bars"/></svg></h2>
          <div class="font-row">
            <div class="fonts">
              <div class="drop split-drop"><select aria-label="Font family"><option>Jalnan Gothic</option></select><svg><use href="#chev"/></svg></div>
              <div class="drop split-drop"><select aria-label="Font style"><option>Regular</option></select><svg><use href="#chev"/></svg></div>
            </div>
            <div class="pickers"><svg width="40" height="40"><use href="#dropper"/></svg><span class="bw"><i></i></span></div>
            <div class="swatches"><svg width="92" height="92" viewBox="0 0 92 92"><path fill="#fff" stroke="#111" stroke-width="2" d="M30 28h60v62H30z"/><path fill="#333" stroke="#111" stroke-width="2" d="M46 48h26v24H46z"/><path stroke="#c41414" stroke-width="4" d="m31 89 58-60"/><path fill="#fff" stroke="#aaa" stroke-width="2" d="M3 64h22v22H3z"/><path stroke="#c41414" stroke-width="2" d="m4 84 20-18"/><path fill="#f00" stroke="#111" stroke-width="2" d="M1 1h61v61H1z"/><use href="#swap" x="64" y="4" width="26" height="24" color="#aaa"/></svg></div>
          </div>
          <div class="metrics sizing">
            <svg width="40" height="32"><use href="#c-size"/></svg><span class="val"><button>95</button> px</span><svg class="tri"><use href="#tri"/></svg>
            <svg width="40" height="40"><use href="#c-lead"/></svg><span class="val"><button>Auto</button></span><svg class="tri"><use href="#tri"/></svg>
            <svg width="40" height="36"><use href="#c-kern"/></svg><span class="val off">Metrics</span><svg class="tri"><use href="#tri"/></svg>
            <svg width="40" height="38"><use href="#c-track"/></svg><span class="val"><button>0</button></span><svg class="tri"><use href="#tri"/></svg>
          </div>
          <div class="metrics stroke">
            <svg width="40" height="28"><use href="#c-stroke"/></svg><span class="val"><button>-</button> px</span><svg class="tri"><use href="#tri"/></svg>
            <div class="drop"><select aria-label="Stroke style"><option></option></select><svg><use href="#chev"/></svg></div>
          </div>
          <div class="metrics scaling">
            <svg width="40" height="32"><use href="#c-vert"/></svg><span class="val"><button>103</button> %</span><svg class="tri"><use href="#tri"/></svg>
            <svg width="40" height="38"><use href="#c-horz"/></svg><span class="val"><button>101</button> %</span><svg class="tri"><use href="#tri"/></svg>
            <svg width="40" height="34"><use href="#c-base"/></svg><span class="val"><button>0</button> px</span><svg class="tri"><use href="#tri"/></svg>
            <svg width="40" height="36"><use href="#c-tsume"/></svg><span class="val"><button>0</button> %</span><svg class="tri"><use href="#tri"/></svg>
          </div>
          <div class="faux">
            <button class="on bold">T</button><button class="on ital">T</button><button>TT</button><button>T<small>T</small></button><button>T<sup>1</sup></button><button>T<sub>1</sub></button>
          </div>
          <div class="options"><label class="check"><input type="checkbox">Ligatures</label><label class="check"><input type="checkbox">Hindi Digits</label></div>
        </section>
      </div>
      <div class="vscroll"><i></i></div>
    </div>
  </aside>
</main>

<section class="panel timeline">
  <div class="layers">
    <div class="tabs">
      <button class="tab t1"><i class="chip"></i>Step1: FK</button>
      <button class="tab t2 active"><span class="x">×</span><i class="chip"></i>Step2: Fake 3D<svg class="bars"><use href="#bars"/></svg></button>
      <button class="tab t3"><i class="chip"></i>Comp 1</button>
    </div>
    <div class="controls">
      <div class="clock"><button>0:00:00:00</button><span>00000 (30.00 fps)</span></div>
      <div class="search"><svg><use href="#find"/></svg><input type="text" aria-label="Search layers"></div>
      <div class="toggles">
        <button aria-label="Mini flowchart"><svg width="36" height="36"><use href="#flow"/></svg></button>
        <button aria-label="Hide shy layers"><svg width="34" height="28"><use href="#shy-up"/></svg></button>
        <button aria-label="Frame blending"><svg width="32" height="32"><use href="#film-big"/></svg></button>
        <button aria-label="Motion blur"><svg width="32" height="32"><use href="#blur"/></svg></button>
        <button aria-label="Graph editor"><svg width="36" height="34"><use href="#graph"/></svg></button>
      </div>
    </div>
    <table class="layer-table">
      <colgroup><col class="l-av"><col class="l-tag"><col class="l-num"><col class="l-name"><col class="l-sw"><col class="l-parent"><col></colgroup>
      <thead><tr>
        <th><div class="slots"><svg class="s-eye"><use href="#eye"/></svg><svg><use href="#speaker"/></svg><svg class="s-dot"><use href="#dot"/></svg><svg><use href="#lock"/></svg></div></th>
        <th class="c-tag"><svg class="tag"><use href="#tag"/></svg></th><th class="c-num">#</th><th class="c-name">Layer Name</th>
        <th><div class="slots sw"><svg><use href="#shy"/></svg><svg><use href="#sun"/></svg><svg><use href="#stairs"/></svg><em>fx</em><svg><use href="#film"/></svg><svg><use href="#blur"/></svg><svg><use href="#half"/></svg><svg><use href="#cube"/></svg></div></th>
        <th class="c-parent">Parent &amp; Link</th><th class="c-end"></th>
      </tr></thead>
      <tbody>
        <tr>
          <td><div class="slots"><span class="well"><svg class="s-eye"><use href="#eye"/></svg></span><span></span><span class="well"><svg class="s-dot"><use href="#dot"/></svg></span><span class="well"></span></div></td>
          <td><div class="tagcell"><svg width="10" height="16" viewBox="0 0 10 16"><path fill="none" stroke="currentColor" stroke-width="2" d="m2 2 6 6-6 6"/></svg><i class="chip violet"></i></div></td><td class="num">1</td>
          <td><div class="lname"><svg><use href="#star"/></svg>Shape Layer 2</div></td>
          <td><div class="slots sw"><span class="well"><svg><use href="#shy"/></svg></span><span class="well faint"><svg><use href="#sun"/></svg></span><span class="well"><svg><use href="#slash"/></svg></span><span class="well"><em>fx</em></span><span></span><span class="well"></span><span class="well"></span><span class="well boxed"><svg><use href="#cube"/></svg></span></div></td>
          <td><div class="parent"><svg><use href="#whip"/></svg><div class="drop"><select aria-label="Parent of layer 1"><option>None</option></select><svg><use href="#chev"/></svg></div></div></td><td></td>
        </tr>
        <tr>
          <td><div class="slots"><span class="well"></span><span></span><span></span><span class="well"></span></div></td>
          <td><div class="tagcell"><svg width="10" height="16" viewBox="0 0 10 16"><path fill="none" stroke="currentColor" stroke-width="2" d="m2 2 6 6-6 6"/></svg><i class="chip violet"></i></div></td><td class="num">2</td>
          <td><div class="lname"><svg><use href="#star"/></svg>Shape Layer 1</div></td>
          <td><div class="slots sw"><span class="well"><svg><use href="#shy"/></svg></span><span class="well faint"><svg><use href="#sun"/></svg></span><span class="well"><svg><use href="#slash"/></svg></span><span></span><span></span><span class="well"></span><span class="well"></span><span class="well boxed dotted"><svg><use href="#cube"/></svg></span></div></td>
          <td><div class="parent"><svg><use href="#whip"/></svg><div class="drop"><select aria-label="Parent of layer 2"><option>None</option></select><svg><use href="#chev"/></svg></div></div></td><td></td>
        </tr>
      </tbody>
    </table>
  </div>
  <div class="tracks">
    <div class="navigator"><i class="span"></i></div>
    <ol class="ruler">
      <li class="sec">00:00f</li><li>10f</li><li>20f</li><li class="sec">01:00f</li><li>10f</li><li>20f</li><li class="sec">02:00f</li><li>10f</li><li>20f</li><li></li><li></li><li></li><li class="sec">04:00f</li><li>10f</li><li>20f</li><li class="sec">05:00f</li>
    </ol>
    <div class="workarea"></div>
    <div class="cache"></div>
    <div class="bar"></div>
    <div class="bar"></div>
    <div class="empty"></div>
    <div class="playhead"><svg width="26" height="28" viewBox="0 0 26 28"><path fill="#2d8ceb" d="M1 0h24v14L13 28 1 14z"/><path stroke="#222" stroke-width="2" d="M11 14h4"/></svg></div>
  </div>
  <div class="edge"><svg width="26" height="30"><use href="#marker"/></svg><svg width="32" height="28"><use href="#shapes"/></svg></div>
  <footer class="time-bar">
    <div class="status">
      <svg class="blue"><use href="#panes"/></svg><svg><use href="#mixer"/></svg><svg><use href="#braces"/></svg><svg class="snail"><use href="#snail"/></svg>
      <span class="render">Frame Render Time <b>4ms</b></span>
      <button>Toggle Switches / Modes</button>
    </div>
    <div class="zoomer"><svg width="24" height="10" viewBox="0 0 38 18" preserveAspectRatio="none"><use href="#hill"/></svg><input type="range" aria-label="Timeline zoom" min="0" max="100" value="54"><svg width="38" height="16"><use href="#hill"/></svg></div>
    <div class="tscroll"><i></i></div>
  </footer>
</section>
</body>
</html>
```
FILE: styles.css
```css
:root {
  --panel: #282828;
  --gap: #171717;
  --well: #161616;
  --line: #1c1c1c;
  --edge: #323232;
  --text: #b4b4b4;
  --dim: #8c8c8c;
  --blue: #3e9be6;
  --accent: #2d8ceb;
  --sand: #a89677;
}
* { box-sizing: border-box; }
html, body { height: 100%; }
body {
  margin: 0;
  display: flex;
  flex-direction: column;
  overflow: hidden;
  background: var(--gap);
  color: var(--text);
  font: 22px/30px "Noto Sans", "Noto Sans CJK KR", sans-serif;
}
button, input, select { font: inherit; color: inherit; background: none; border: 0; padding: 0; margin: 0; outline: 0; text-align: left; }
button { display: block; white-space: nowrap; }
select { appearance: none; }
svg { display: block; flex: none; }
h1, h2, p, ol, ul { margin: 0; padding: 0; font-weight: 400; list-style: none; }
h2 { font-size: 22px; }
.sprite { position: absolute; width: 0; height: 0; }
.bars { width: 18px; height: 18px; color: #a8a8a8; }
.tri { width: 14px; height: 14px; color: #9a9a9a; }
.chip { display: block; width: 22px; height: 22px; background: var(--sand); flex: none; }
.chip.violet { width: 26px; height: 26px; background: #6b7ee0; }
.panel { background: var(--panel); min-width: 0; min-height: 0; }

/* title bar */
.titlebar { flex: none; height: 46px; display: grid; grid-template-columns: 120px 1fr 120px; align-items: center; background: #e8e8e8; border-top: 4px solid #d5d2ca; border-bottom: 1px solid #000; border-radius: 6px 6px 0 0; }
.titlebar h1 { font: 23px/30px "Inter", "Noto Sans CJK KR", sans-serif; color: #a3a3a3; text-align: center; white-space: nowrap; }
.lights { display: flex; gap: 13px; padding-left: 3px; }
.light { width: 19px; height: 19px; border-radius: 50%; background: #d0d0d0; border: 1px solid #b5b5b5; }
.edited { background: radial-gradient(circle, #555 3px, #d0d0d0 4px); }

/* toolbar */
.toolbar { flex: none; height: 52px; display: flex; align-items: center; background: var(--panel); color: #b0b0b0; margin-bottom: 4px; }
.grip { width: 17px; height: 40px; background: repeating-linear-gradient(#1a1a1a 0 2px, transparent 2px 4px) 3px 0 / 6px 40px no-repeat; }
.tool { position: relative; width: 53px; height: 46px; display: grid; place-items: center; flex: none; }
.tool svg { width: 36px; height: 36px; }
.tool.slim { width: 48px; }
.tool.on { color: var(--accent); }
.tool.on::before { content: ""; position: absolute; inset: 0 3px; background: #151515; border: 1px solid #303030; border-radius: 4px; }
.tool.on svg { position: relative; }
.tool.more::after { content: ""; position: absolute; right: 2px; bottom: 2px; border: 4px solid transparent; border-right-color: #999; border-bottom-color: #999; }
.rule { flex: none; width: 2px; height: 38px; margin: 0 6px; background: #323232; }
.rule.wide { margin: 0 13px; }
.divider { width: 3px; height: 52px; background: #323232; margin-left: 54px; flex: none; }
.modes { display: flex; align-items: center; flex: none; width: 846px; height: 52px; padding-left: 39px; border-right: 2px solid #171717; }
.mode-name { margin: 0 7px 0 5px; }
.check { display: flex; align-items: center; gap: 6px; color: #9e9e9e; }
.check input { appearance: none; width: 30px; height: 30px; border: 4px solid #8c8c8c; border-radius: 4px; }
.modes .check { margin-left: 8px; padding-top: 2px; }
.snap-edge { margin-left: 12px; }
.snap-edge svg { width: 32px; height: 32px; }
.modes .snap-edge + .tool svg { width: 28px; height: 32px; }
.workspaces { display: flex; align-items: center; flex: 1; padding-left: 47px; padding-top: 6px; color: #9a9a9a; min-width: 0; }
.workspaces .current { color: var(--blue); width: 104px; }
.ws-menu .bars { color: var(--blue); }
.ws-review { margin-left: 46px; }
.ws-learn { margin-left: 94px; }
.ws-small { margin-left: 92px; }
.overflow { margin-left: auto; margin-right: 28px; margin-bottom: 4px; color: #aaa; }
.help { display: flex; align-items: center; gap: 24px; flex: none; width: 410px; height: 38px; margin-right: 7px; padding-left: 10px; background: var(--well); border: 1px solid var(--edge); border-radius: 4px; color: #b8b8b8; }
.workspaces + .help { box-shadow: -10px 0 0 -8px #323232; }
.help input { flex: 1; min-width: 0; padding-top: 5px; }
.help input::placeholder { color: #b8b8b8; opacity: 1; }

/* upper workspace */
.workspace { flex: 1013 1 0; min-height: 0; display: grid; grid-template-columns: 671px minmax(0, 1fr) 659px; gap: 8px; position: relative; z-index: 2; }
.tabs { display: flex; height: 56px; flex: none; }
.tab { display: flex; align-items: center; gap: 20px; height: 56px; padding-top: 4px; color: var(--dim); border-bottom: 5px solid transparent; }
.tab.active { color: #c8c8c8; border-bottom-color: #b4b4b4; }
.tab b { font-weight: 400; color: var(--blue); }
.tab .x { font-size: 20px; color: #999; }
.project, .viewer { display: flex; flex-direction: column; }
.project .tabs { padding-left: 17px; gap: 76px; }
.project .tab.active { gap: 22px; padding-left: 3px; }
.summary { display: flex; height: 154px; margin: 16px 0 0 7px; gap: 10px; flex: none; }
.thumb { width: 242px; height: 138px; background: #000; }
.facts { display: flex; flex-direction: column; font-size: 21px; line-height: 28px; color: #9a9a9a; }
.facts strong { display: flex; align-items: center; gap: 4px; font-size: 22px; font-weight: 600; line-height: 24px; }
.facts strong .tri { width: 14px; height: 11px; }
.search { display: flex; align-items: center; height: 40px; flex: none; background: var(--well); border: 2px solid #2f2f2f; border-radius: 4px; color: #b0b0b0; }
.search svg { width: 40px; height: 30px; margin-left: 12px; }
.search input { flex: 1; min-width: 0; height: 100%; }
.project .search { margin: 69px 12px 14px 8px; }
.items { table-layout: fixed; width: 100%; border-collapse: collapse; flex: none; }
.items th { height: 41px; border-top: 2px solid #222; border-bottom: 1px solid #202020; font-weight: 400; font-size: 18px; text-align: left; color: #a0a0a0; padding: 0 0 0 14px; background: linear-gradient(#111, #111) 0 50% / 2px 22px no-repeat; }
.items th:first-child, .items th.side { background: none; }
.items th.name { padding-left: 11px; }
.items th.label { padding-left: 10px; }
.tag { width: 28px; height: 26px; color: #b5b5b5; }
.w-pad { width: 29px; } .w-name { width: 501px; } .w-label { width: 47px; } .w-type { width: 56px; }
.items td { height: 40px; padding: 0; border-bottom: 2px solid #232323; color: #a0a0a0; }
.items .name div { display: flex; align-items: center; height: 38px; }
.comp { width: 36px; height: 28px; }
.name span { flex: 1; padding-left: 5px; line-height: 38px; }
.items .selected td { background: #343434; }
.items .selected .name span { background: #9e9e9e; color: #1e1e1e; font-weight: 600; }
.items td.label { padding-left: 12px; }
.items td.type { padding-left: 14px; overflow: hidden; text-overflow: clip; }
.items td.side, .items .selected td.side { background: #242424; padding-left: 4px; border-bottom-color: #242424; }
.tree { width: 28px; height: 26px; color: #b5b5b5; }
.items-rest { flex: 1; border-right: 38px solid #242424; border-bottom: 2px solid #050505; min-height: 0; }
.project-bar { display: flex; align-items: center; height: 36px; flex: none; color: #b0b0b0; padding-left: 3px; gap: 20px; }
.project-bar .depth { width: 96px; height: 32px; text-align: center; font-size: 18px; background: #1e1e1e; border: 2px solid #2d2d2d; border-radius: 4px; line-height: 28px; margin-left: -2px; }
.project-bar .bin { margin: 0 -2px 0 -7px; }
.hscroll { flex: 1; height: 36px; background: #1f1f1f; margin-right: 38px; }
.hscroll i { display: block; width: 81px; height: 32px; border-radius: 16px; background: #333; }

/* composition viewer */
.viewer .tabs { padding-left: 24px; gap: 76px; }
.viewer .tab.active { gap: 21px; }
.viewer .x { margin-right: -2px; }
.lock { width: 20px; height: 24px; color: #b0b0b0; }
.viewer .lock + span { margin-left: -2px; }
.crumbs { padding: 8px 0 0 43px; height: 57px; flex: none; border-bottom: 3px solid #111; }
.crumbs button { width: 218px; height: 36px; padding-left: 17px; color: var(--blue); background: var(--well); border: 1px solid #2e2e2e; border-radius: 3px; }
.stage { flex: 1; min-height: 0; background: #232323; border-top: 1px solid #303030; border-bottom: 2px solid #1e1e1e; padding: 19px 0 0 24px; }
.view-name { font-size: 24px; line-height: 34px; color: #c4c4c4; text-shadow: 1px 1px 1px #000; }
.canvas { margin: 169px 0 0 313px; }
.view-bar { display: flex; align-items: center; height: 48px; flex: none; padding-left: 12px; color: #b0b0b0; }
.view-bar .rule { margin: 0 12px; height: 34px; }
.w144 { width: 144px; } .w156 { width: 156px; } .w184 { width: 184px; }
.drop { position: relative; height: 38px; flex: none; }
.drop select { width: 100%; height: 100%; padding: 0 36px 0 12px; background: #1c1c1c; border: 2px solid #2e2e2e; border-radius: 4px; color: #c0c0c0; }
.drop svg { position: absolute; right: 10px; top: 13px; width: 18px; height: 12px; color: #b8b8b8; pointer-events: none; }
.box { height: 38px; flex: none; display: flex; align-items: center; justify-content: center; gap: 8px; background: #1c1c1c; border: 2px solid #2e2e2e; border-radius: 4px; color: #9e9e9e; }
.cell { width: 46px; height: 44px; flex: none; display: grid; place-items: center; }
.cell.snug { width: 43px; }
.cell.on { background: #141414; border-radius: 4px; color: #b0b0b0; }
.cell.on + .cell + .cell.on { color: var(--accent); }
.cell.dim { color: #434343; }
.exposure { width: 68px; padding-left: 3px; color: var(--blue); }
.camera-picker { position: relative; flex: 1; height: 48px; margin-left: 3px; }
.camera-btn { display: flex; align-items: center; justify-content: space-between; width: 100%; height: 44px; padding: 4px 8px 0 10px; background: #1e1e1e; color: #c0c0c0; }
.menu { position: absolute; z-index: 3; top: 43px; left: -2px; width: 384px; padding-bottom: 3px; background: #1c1c1c; border: 1px solid #2c2c2c; }
.menu li button { position: relative; width: 100%; height: 46px; padding-left: 43px; color: #c4c4c4; }
.menu .chosen button { color: var(--blue); }
.menu .split { height: 12px; padding-top: 5px; }
.menu .split::before { content: ""; display: block; height: 2px; background: #303030; }
.tick { position: absolute; left: 7px; top: 13px; width: 24px; height: 20px; color: #c4c4c4; }
.highlight { position: absolute; z-index: 4; top: 0; left: 0; width: 379px; height: 738px; border: 5px solid #f9290c; pointer-events: none; }

/* right column */
.right { display: flex; flex-direction: column; gap: 8px; min-width: 0; min-height: 0; }
.preview { height: 119px; flex: none; }
.preview h2 { display: flex; align-items: center; gap: 24px; height: 56px; padding: 2px 0 0 26px; color: #b8b8b8; }
.transport { display: flex; padding: 22px 0 0 86px; }
.transport button { width: 51px; }
.transport svg { width: 28px; height: 20px; margin: 0 auto; color: #b0b0b0; }
.stack { flex: 1; min-height: 0; display: flex; }
.stack-body { flex: 1; min-width: 0; background: var(--panel); padding: 0 3px; }
.vscroll { width: 24px; background: #1b1b1b; padding-left: 2px; }
.vscroll i { display: block; height: 665px; border-radius: 11px; background: #323232; }
.group { border-bottom: 2px solid #171717; }
.group h2 { display: flex; align-items: center; justify-content: space-between; height: 58px; padding: 0 20px 0 23px; color: #b8b8b8; }
.properties { height: 109px; }
.effects { height: 159px; }
.group.effects h2 { height: 66px; }
.effects .search { margin: 1px 8px 8px 9px; }
.preset-list { height: 36px; border-top: 2px solid #050505; border-right: 2px solid #050505; display: flex; justify-content: flex-end; padding: 5px 11px 0 0; color: #b5b5b5; }
.character { border: 0; }
.group.character h2 { height: 64px; margin-bottom: 16px; }
.font-row { display: flex; height: 102px; padding-left: 8px; }
.fonts { width: 258px; display: flex; flex-direction: column; gap: 13px; }
.split-drop select { background: linear-gradient(90deg, #2e2e2e 2px, #1c1c1c 2px) 100% 0 / 36px 100% no-repeat var(--well); }
.pickers { width: 64px; padding-left: 10px; color: #aaa; }
.bw { display: block; width: 44px; height: 38px; margin-top: 11px; padding: 2px; background: #fff; border: 2px solid #aaa; }
.bw i { display: block; height: 17px; background: #000; margin: -2px; border-bottom: 2px solid #aaa; }
.metrics { display: grid; grid-template-columns: 53px 95px 75px 67px 97px 25px; width: 412px; margin-left: 8px; align-items: center; border-top: 2px solid #303030; color: #b0b0b0; }
.sizing { grid-auto-rows: 44px; height: 105px; align-content: start; }
.stroke { height: 66px; padding-bottom: 5px; }
.stroke .drop { grid-column: 4 / -1; margin-left: -50px; }
.scaling { grid-auto-rows: 46px; height: 110px; padding-top: 3px; align-content: start; }
.val { color: #9a9a9a; }
.val button { display: inline; color: var(--blue); }
.val.off { color: #545454; }
.faux { display: flex; align-items: center; width: 412px; margin-left: 8px; height: 64px; padding-left: 41px; border-top: 2px solid #303030; font-family: "Noto Serif", "DejaVu Serif", serif; color: #a8a8a8; }
.faux button { width: 53px; height: 42px; text-align: center; line-height: 40px; font-size: 28px; }
.faux button:nth-child(3) { margin-left: 10px; }
.faux button:nth-child(5) { margin-left: 10px; }
.faux small { font-size: 22px; }
.faux sup, .faux sub { font-size: 17px; line-height: 1px; }
.faux .on { background: #141414; border: 2px solid #2c2c2c; border-radius: 4px; color: var(--accent); line-height: 36px; }
.bold { font-weight: 700; }
.ital { font-style: italic; }
.options { display: flex; margin: 9px 0 0 20px; }
.options .check { width: 208px; }

/* timeline */
.timeline { flex: 700 1 0; margin-top: 9px; display: grid; grid-template-columns: 1123px minmax(0, 1fr) 36px; grid-template-rows: 1fr 30px; position: relative; }
.layers { min-width: 0; border-right: 1px solid #111; }
.timeline .tab { gap: 24px; }
.t1 { margin-left: 48px; }
.t2 { margin-left: 81px; }
.timeline .t2 { gap: 23px; }
.t2 .x { margin-right: -3px; }
.t3 { margin-left: 75px; }
.controls { display: flex; height: 79px; padding-left: 17px; border-bottom: 2px solid #1f1f1f; }
.clock { width: 190px; color: var(--blue); }
.clock button { font-size: 32px; font-weight: 600; line-height: 34px; margin: 11px 0 0 5px; }
.clock span { display: block; font-size: 20px; line-height: 26px; color: #1b6ba4; }
.controls .search { width: 561px; height: 42px; margin-top: 18px; }
.controls .search svg { margin-left: 10px; }
.toggles { display: flex; align-items: center; gap: 24px; padding: 3px 0 0 32px; color: #b0b0b0; }
.toggles button:nth-child(2) { margin-left: 11px; }
.toggles button:nth-child(5) { margin-left: 14px; }
.layer-table { table-layout: fixed; width: 100%; border-collapse: collapse; }
.l-av { width: 139px; } .l-tag { width: 67px; } .l-num { width: 71px; } .l-name { width: 274px; } .l-sw { width: 290px; } .l-parent { width: 248px; }
.layer-table th { height: 39px; padding: 0; font-weight: 400; font-size: 18px; text-align: left; color: #999; background: linear-gradient(#111, #111) 0 50% / 2px 22px no-repeat; }
.layer-table th:first-child { background: none; }
.layer-table .c-tag { padding-left: 28px; }
.layer-table .c-num { padding-left: 12px; font-style: italic; }
.layer-table .c-name { padding-left: 11px; }
.layer-table .c-parent { padding-left: 12px; }
.layer-table td { height: 36px; padding: 0; background: #303030; border-bottom: 2px solid #252525; color: #a6a6a6; }
.slots { display: flex; gap: 4px; padding-left: 5px; align-items: center; color: #b5b5b5; }
.slots > *, .slots.sw > * { width: 28px; height: 28px; display: grid; place-items: center; flex: none; }
.slots.sw { padding-left: 10px; }
.slots svg { width: 26px; height: 24px; }
.slots > svg, .slots.sw > svg { width: 28px; height: 26px; padding: 1px; }
.slots .s-dot, .slots > svg.s-dot { height: 16px; padding: 0; }
.slots .s-eye { height: 20px; }
.slots em { font: italic 26px/26px "Noto Sans", sans-serif; text-align: center; }
.well { background: #222; }
.slots .faint { color: #777; }
.boxed { outline: 2px solid #8a8a8a; outline-offset: -2px; }
.boxed.dotted { outline-style: dotted; }
.slots .boxed svg { width: 22px; height: 22px; }
.tagcell { display: flex; align-items: center; gap: 14px; padding-left: 12px; }
.layer-table .num { padding-left: 14px; font-weight: 600; }
.lname { display: flex; align-items: center; gap: 14px; padding-left: 7px; font-weight: 600; }
.lname svg { width: 24px; height: 24px; color: #b5b5b5; }
.parent { display: flex; align-items: center; gap: 13px; padding-left: 11px; }
.parent > svg { width: 26px; height: 24px; }
.parent .drop { width: 188px; height: 32px; }
.parent .drop select { background: #1b1b1b; border: 0; border-radius: 0; line-height: 30px; }
.parent .drop svg { top: 10px; }
.tracks { position: relative; overflow: hidden; display: flex; flex-direction: column; padding-top: 69px; }
.navigator { height: 22px; margin: 0 13px 0 2px; background: #3f3a32; border-top: 2px solid #111; border-bottom: 1px solid #222; flex: none; }
.span { display: block; width: 1028px; height: 19px; background: #666; border: solid var(--accent); border-width: 0 14px; border-radius: 9px; max-width: 100%; }
.ruler { display: flex; height: 42px; margin-left: -50px; flex: none; width: 2200px; font-size: 20px; line-height: 32px; color: #999; }
.ruler li { position: relative; width: 133px; height: 42px; text-align: center; flex: none; }
.ruler li::after { content: ""; position: absolute; left: 66px; bottom: 0; width: 2px; height: 11px; background: #999; }
.ruler .sec::after { height: 16px; }
.workarea { height: 33px; margin-left: 3px; background: #5f5f5f; border-top: 2px solid #050505; border-left: 12px solid var(--accent); border-radius: 6px 0 0 0; flex: none; }
.cache { height: 9px; margin-left: 16px; background: #14bb24; border-top: 2px solid #111; border-bottom: 1px solid #111; flex: none; }
.bar { height: 36px; margin-left: 16px; background: #525a8f; border-bottom: 3px solid #2c3050; border-top: 1px solid #6a7196; flex: none; }
.empty { flex: 1; background: #353535; min-height: 0; }
.playhead { position: absolute; top: 101px; bottom: 0; left: 3px; width: 26px; }
.playhead::after { content: ""; display: block; width: 2px; height: 100%; margin-left: 12px; background: var(--accent); }
.edge { border-left: 1px solid #1b1b1b; color: #b5b5b5; padding-top: 137px; display: flex; flex-direction: column; align-items: center; gap: 13px; }
.time-bar { grid-column: 1 / -1; display: flex; height: 30px; overflow: hidden; border-top: 2px solid #050505; }
.status { display: flex; align-items: center; height: 34px; flex: none; width: 1123px; padding-left: 10px; gap: 16px; color: #b0b0b0; }
.status svg { width: 24px; height: 28px; }
.status .snail { width: 28px; }
.status .blue { color: var(--accent); }
.render { margin-left: 43px; color: #9a9a9a; }
.render b { color: #5ed0a8; font-weight: 600; margin-left: 4px; }
.status button { margin-left: 66px; margin-top: 2px; width: 282px; height: 36px; text-align: center; background: #1c1c1c; border: 2px solid #2d2d2d; color: #9a9a9a; }
.zoomer { display: flex; align-items: center; height: 34px; padding-left: 11px; flex: none; width: 230px; color: #b5b5b5; }
.zoomer input { appearance: none; width: 92px; height: 6px; margin: 4px 23px 0 32px; background: #404040; }
.zoomer input::-webkit-slider-thumb { appearance: none; width: 20px; height: 20px; border: 3px solid #999; border-radius: 50%; background: #282828; }
.tscroll { flex: 1; background: #1c1c1c; margin-right: 36px; }
.tscroll i { display: block; width: 899px; height: 44px; border-radius: 22px; background: #313131; }
```
